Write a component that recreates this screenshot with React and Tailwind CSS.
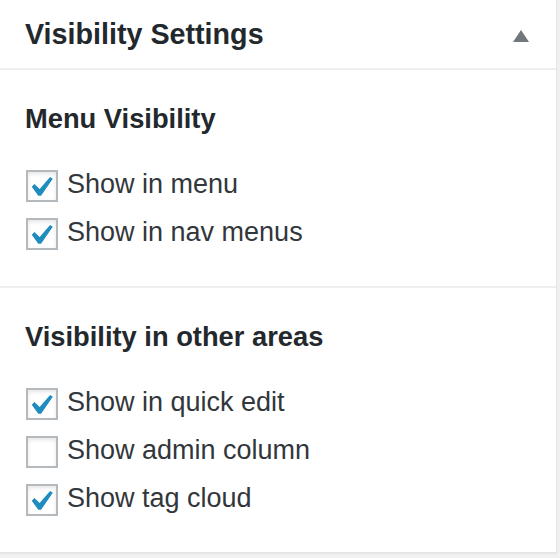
import React from "react";

function Check({ checked, label }) {
  return (
    <div className="flex items-start h-[32px]">
      <div className="relative w-[32px] h-[32px] shrink-0 border-2 border-[#b4b9be] bg-white shadow-[inset_0_2px_4px_rgba(0,0,0,0.1)]">
        {checked && (
          <svg
            className="absolute left-[-8px] top-[-5px]"
            width="40.6"
            height="40.6"
            viewBox="0 0 20 20"
          >
            <path
              fill="#1e8cbe"
              d="M14.83 4.89l1.34.94-5.81 8.38H9.02L5.78 9.67l1.34-1.25 2.57 2.4z"
            />
          </svg>
        )}
      </div>
      <span className="ml-[9px] text-[27px] leading-[28px] text-[#32373c] whitespace-nowrap">
        {label}
      </span>
    </div>
  );
}

function Section({ title, items, last }) {
  return (
    <div
      className={
        "pt-[31px] pb-[36px] px-[25px] " +
        (last ? "" : "border-b-2 border-[#eeeeee]")
      }
    >
      <div className="text-[27.3px] leading-[36px] font-bold text-[#23282d] whitespace-nowrap">
        {title}
      </div>
      <div className="mt-[33px] pl-[1px] flex flex-col gap-[16px]">
        {items.map((it) => (
          <Check key={it.label} checked={it.checked} label={it.label} />
        ))}
      </div>
    </div>
  );
}

export default function App() {
  return (
    <div
      className="w-[560px] h-[558px] bg-[#f1f1f1] overflow-hidden"
      style={{ fontFamily: '"Liberation Sans", Arial, sans-serif' }}
    >
      <div className="w-[557px] h-[553px] bg-white border-r border-b border-[#e5e5e5] shadow-[0_1px_2px_rgba(0,0,0,0.06)]">
        <div className="h-[70px] flex items-start justify-between border-b-2 border-[#eeeeee] pl-[25px] pr-[27px]">
          <div className="text-[28.7px] leading-[68px] font-bold text-[#23282d] whitespace-nowrap">
            Visibility Settings
          </div>
          <svg className="mt-[30px]" width="16" height="12" viewBox="0 0 16 12">
            <path d="M8 0 L16 12 L0 12 Z" fill="#72777c" />
          </svg>
        </div>
        <Section
          title="Menu Visibility"
          items={[
            { label: "Show in menu", checked: true },
            { label: "Show in nav menus", checked: true },
          ]}
        />
        <Section
          title="Visibility in other areas"
          last
          items={[
            { label: "Show in quick edit", checked: true },
            { label: "Show admin column", checked: false },
            { label: "Show tag cloud", checked: true },
          ]}
        />
      </div>
    </div>
  );
}
